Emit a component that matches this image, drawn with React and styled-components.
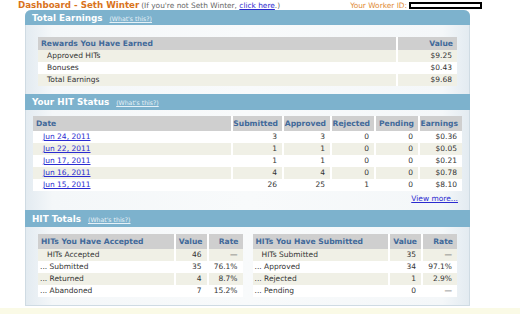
import React from "react";
import styled, { createGlobalStyle } from "styled-components";

const GlobalStyle = createGlobalStyle`
  html, body {
    margin: 0;
    padding: 0;
    background: #ffffff;
  }
  body {
    font-family: "DejaVu Sans", Verdana, sans-serif;
    color: #333333;
  }
`;

const Page = styled.div`
  width: 520px;
  height: 314px;
  overflow: hidden;
  display: flex;
  flex-direction: column;
`;

const TopBar = styled.div`
  height: 13px;
  width: 464px;
  margin-left: 18px;
  display: flex;
  align-items: center;
`;

const Title = styled.span`
  font-size: 8.7px;
  font-weight: bold;
  color: #d9731c;
  white-space: nowrap;
`;

const Note = styled.span`
  font-size: 7.4px;
  color: #666;
  margin-left: 2px;
  white-space: nowrap;

  a {
    color: #2b2bd0;
    text-decoration: underline;
  }
`;

const WorkerId = styled.span`
  margin-left: auto;
  display: flex;
  align-items: center;
  gap: 2px;
  font-size: 7.4px;
  color: #e08a34;
  white-space: nowrap;
`;

const IdBox = styled.span`
  width: 69px;
  height: 3px;
  border: 2px solid #000;
  background: #fff;
`;

const Panel = styled.div`
  margin-left: 25px;
  width: 443px;
  border: 1px solid #cfdbe3;
  border-top: none;
  border-radius: 6px 6px 0 0;
  background: linear-gradient(
    to right,
    #e3ebf1,
    #f4f7f9 6%,
    #f8fafb 50%,
    #f4f7f9 94%,
    #e3ebf1
  );
`;

const SectionHeader = styled.div`
  height: ${({ $h }) => $h}px;
  display: flex;
  align-items: center;
  gap: 7px;
  padding-left: 7px;
  background: #7db2cd;
  color: #ffffff;
  font-size: 8.8px;
  font-weight: bold;
  border-radius: ${({ $top }) => ($top ? "6px 6px 0 0" : "0")};
  margin: 0 -1px;
`;

const Help = styled.a`
  font-size: 6.2px;
  font-weight: normal;
  color: #e6f1f7;
  text-decoration: underline;
  margin-top: 1px;
`;

const SectionBody = styled.div`
  padding: ${({ $pad }) => $pad};
`;

const Split = styled.div`
  display: flex;
  gap: 10px;
`;

const Table = styled.table`
  width: 100%;
  border-collapse: collapse;
  table-layout: fixed;
  font-size: 7.5px;

  th + th,
  td + td {
    border-left: 2px solid #ffffff;
  }
`;

const HeadRow = styled.tr`
  height: ${({ $h }) => $h}px;
  background: #cfcfcf;
`;

const Th = styled.th`
  padding: 0 ${({ $right }) => ($right ? "4px" : "0")} 0
    ${({ $right }) => ($right ? "0" : "3px")};
  font-size: 7.6px;
  font-weight: bold;
  color: #41699a;
  text-align: ${({ $right }) => ($right ? "right" : "left")};
  white-space: nowrap;
  overflow: hidden;
`;

const Row = styled.tr`
  height: 12px;
  background: ${({ $alt }) => ($alt ? "#f0f0e6" : "#ffffff")};
`;

const Td = styled.td`
  padding: 0 ${({ $right }) => ($right ? "5px" : "0")} 0
    ${({ $indent = 0 }) => $indent}px;
  line-height: 12px;
  text-align: ${({ $right }) => ($right ? "right" : "left")};
  white-space: nowrap;
  color: #333;
`;

const Link = styled.a`
  color: #2b2bd0;
  text-decoration: underline;
`;

const MoreRow = styled.div`
  display: flex;
  justify-content: flex-end;
  padding: 3px 4px 0 0;
  font-size: 7.5px;
  height: 10px;
`;

const Band = styled.div`
  margin-top: 2px;
  height: 10px;
  background: #fafae6;
`;

const earnings = [
  ["Approved HITs", "$9.25"],
  ["Bonuses", "$0.43"],
  ["Total Earnings", "$9.68"],
];

const status = [
  ["Jun 24, 2011", 3, 3, 0, 0, "$0.36"],
  ["Jun 22, 2011", 1, 1, 0, 0, "$0.05"],
  ["Jun 17, 2011", 1, 1, 0, 0, "$0.21"],
  ["Jun 16, 2011", 4, 4, 0, 0, "$0.78"],
  ["Jun 15, 2011", 26, 25, 1, 0, "$8.10"],
];

const accepted = [
  ["HITs Accepted", 46, "—"],
  ["... Submitted", 35, "76.1%"],
  ["... Returned", 4, "8.7%"],
  ["... Abandoned", 7, "15.2%"],
];

const submitted = [
  ["HITs Submitted", 35, "—"],
  ["... Approved", 34, "97.1%"],
  ["... Rejected", 1, "2.9%"],
  ["... Pending", 0, "—"],
];

function TotalsTable({ title, rows }) {
  return (
    <Table>
      <colgroup>
        <col />
        <col style={{ width: 33 }} />
        <col style={{ width: 35 }} />
      </colgroup>
      <thead>
        <HeadRow $h={15}>
          <Th>{title}</Th>
          <Th $right>Value</Th>
          <Th $right>Rate</Th>
        </HeadRow>
      </thead>
      <tbody>
        {rows.map((r, i) => (
          <Row key={r[0]} $alt={i % 2 === 0}>
            <Td $indent={i === 0 ? 9 : 2}>{r[0]}</Td>
            <Td $right>{r[1]}</Td>
            <Td $right>{r[2]}</Td>
          </Row>
        ))}
      </tbody>
    </Table>
  );
}

export default function App() {
  return (
    <>
      <GlobalStyle />
      <Page>
        <TopBar>
          <Title>Dashboard - Seth Winter</Title>
          <Note>
            (If you're not Seth Winter, <a href="#">click here</a>.)
          </Note>
          <WorkerId>
            Your Worker ID: <IdBox />
          </WorkerId>
        </TopBar>

        <Panel>
          {/* -------- TOTAL EARNINGS -------- */}
          <SectionHeader $h={15} $top>
            Total Earnings <Help href="#">(What's this?)</Help>
          </SectionHeader>
          <SectionBody $pad="12px 12px 8px 12px">
            <Table>
              <colgroup>
                <col />
                <col style={{ width: 60 }} />
              </colgroup>
              <thead>
                <HeadRow $h={13}>
                  <Th>Rewards You Have Earned</Th>
                  <Th $right>Value</Th>
                </HeadRow>
              </thead>
              <tbody>
                {earnings.map((r, i) => (
                  <Row key={r[0]} $alt={i % 2 === 0}>
                    <Td $indent={9}>{r[0]}</Td>
                    <Td $right>{r[1]}</Td>
                  </Row>
                ))}
              </tbody>
            </Table>
          </SectionBody>

          {/* -------- HIT STATUS -------- */}
          <SectionHeader $h={16}>
            Your HIT Status <Help href="#">(What's this?)</Help>
          </SectionHeader>
          <SectionBody $pad="6px 7px 6px 7px">
            <Table>
              <colgroup>
                <col />
                <col style={{ width: 51 }} />
                <col style={{ width: 48 }} />
                <col style={{ width: 44 }} />
                <col style={{ width: 44 }} />
                <col style={{ width: 43 }} />
              </colgroup>
              <thead>
                <HeadRow $h={15}>
                  <Th>Date</Th>
                  <Th $right>Submitted</Th>
                  <Th $right>Approved</Th>
                  <Th $right>Rejected</Th>
                  <Th $right>Pending</Th>
                  <Th $right>Earnings</Th>
                </HeadRow>
              </thead>
              <tbody>
                {status.map((r, i) => (
                  <Row key={r[0]} $alt={i % 2 === 1}>
                    <Td $indent={10}>
                      <Link href="#">{r[0]}</Link>
                    </Td>
                    {r.slice(1).map((v, j) => (
                      <Td key={j} $right>
                        {v}
                      </Td>
                    ))}
                  </Row>
                ))}
              </tbody>
            </Table>
            <MoreRow>
              <Link href="#">View more...</Link>
            </MoreRow>
          </SectionBody>

          {/* -------- HIT TOTALS -------- */}
          <SectionHeader $h={17}>
            HIT Totals <Help href="#">(What's this?)</Help>
          </SectionHeader>
          <SectionBody $pad="7px 12px 8px 12px">
            <Split>
              <TotalsTable title="HITs You Have Accepted" rows={accepted} />
              <TotalsTable title="HITs You Have Submitted" rows={submitted} />
            </Split>
          </SectionBody>
        </Panel>
        <Band />
      </Page>
    </>
  );
}
